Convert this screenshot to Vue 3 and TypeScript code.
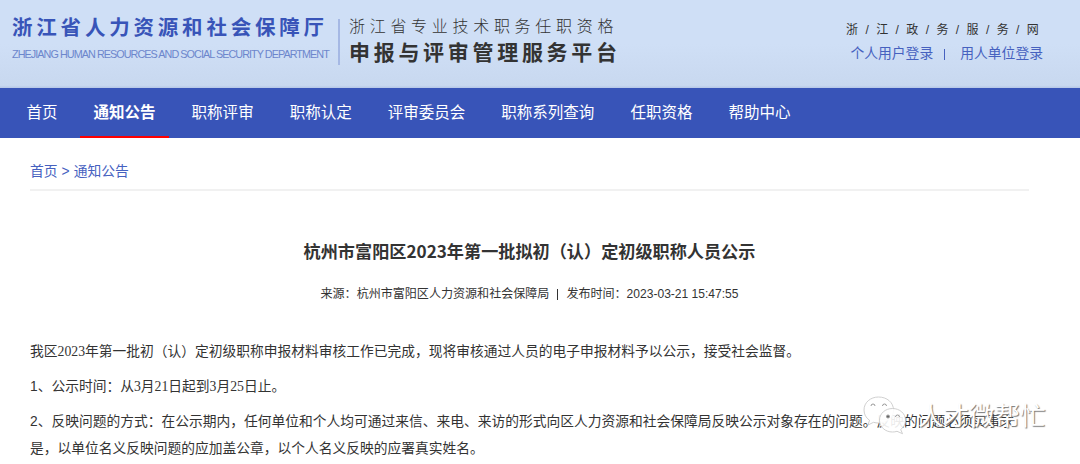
<template>
  <div class="page">
    <header class="banner">
      <div class="brand">
        <div class="dept">
          <div class="dept-cn">浙江省人力资源和社会保障厅</div>
          <div class="dept-en">ZHEJIANG HUMAN RESOURCES AND SOCIAL SECURITY DEPARTMENT</div>
        </div>
        <div class="platform">
          <div class="platform-sub">浙江省专业技术职务任职资格</div>
          <div class="platform-name">申报与评审管理服务平台</div>
        </div>
      </div>
      <div class="portal">
        <div class="portal-name">
          <span v-for="(c, i) in portal" :key="i">{{ c }}</span>
        </div>
        <div class="login">
          <a>个人用户登录</a>
          <i class="bar"></i>
          <a>用人单位登录</a>
        </div>
      </div>
    </header>

    <nav class="nav">
      <a
        v-for="item in menus"
        :key="item"
        class="nav-item"
        :class="{ active: item === current }"
        @click="current = item"
        >{{ item }}</a
      >
    </nav>

    <main class="content">
      <div class="crumbs"><a>首页</a><span class="gt">&gt;</span><a>通知公告</a></div>

      <h1>杭州市富阳区2023年第一批拟初（认）定初级职称人员公示</h1>
      <div class="meta">
        <span>来源：杭州市富阳区人力资源和社会保障局</span>
        <i class="bar"></i>
        <span>发布时间：2023-03-21 15:47:55</span>
      </div>

      <div class="article">
        <p>我区2023年第一批初（认）定初级职称申报材料审核工作已完成，现将审核通过人员的电子申报材料予以公示，接受社会监督。</p>
        <p><span class="num">1</span>、公示时间：从3月21日起到3月25日止。</p>
        <p>
          <span class="num">2</span>、反映问题的方式：在公示期内，任何单位和个人均可通过来信、来电、来访的形式向区人力资源和社会保障局反映公示对象存在的问题。反映的问题必须实事求<br />是，以单位名义反映问题的应加盖公章，以个人名义反映的应署真实姓名。
        </p>
      </div>
    </main>

    <div class="watermark">
      <svg viewBox="0 0 46 40" width="46" height="40">
        <path
          class="bubble"
          d="M15.500 1C7.500 1 1 6.500 1 14c0 4.300 2 7.800 5.500 10.300L5 29l5.500-2.700c1.700.5 3.300.7 5 .7C24 27 30.500 21.500 30.500 14S24 1 15.500 1z"
        />
        <path class="eye" d="M8 10a2 2 0 0 1 4 0M19.500 10a2 2 0 0 1 4 0" />
        <path
          class="bubble"
          d="M29.500 12.500c-7.200 0-13 5-13 11.700s5.800 11.800 13 11.800c1.600 0 3.100-.2 4.500-.7l5.500 2.400-1.800-4.200c3-2.200 4.800-5.500 4.800-9.300 0-6.700-5.800-11.700-13-11.700z"
        />
        <path class="eye" d="M32.500 21a2 2 0 0 1 4 0" />
        <circle class="eye dark" cx="25" cy="20.500" r="1.500" />
      </svg>
      <span class="wm-text">人才微帮忙</span>
    </div>
  </div>
</template>

<script setup lang="ts">
import { ref } from 'vue'

const menus: string[] = [
  '首页',
  '通知公告',
  '职称评审',
  '职称认定',
  '评审委员会',
  '职称系列查询',
  '任职资格',
  '帮助中心',
]
const current = ref('通知公告')
const portal = '浙/江/政/务/服/务/网'.split('')
</script>

<style>
body {
  margin: 0;
  background: #fff;
}
</style>

<style scoped>
.page {
  position: relative;
  width: 1080px;
  height: 464px;
  overflow: hidden;
  font-family: 'Liberation Sans', 'Noto Sans CJK SC', sans-serif;
  color: #333;
  white-space: nowrap;
}

/* --- BANNER --- */
.banner {
  height: 88px;
  box-sizing: border-box;
  display: flex;
  justify-content: space-between;
  padding: 0 37px 0 12px;
  background: linear-gradient(180deg, #cfdff6 0%, #cfdff6 50%, #c8d8ef 97%, #b5c6e6 100%);
}

.brand {
  display: flex;
}

.dept {
  width: 326px;
  padding-top: 13px;
}

.dept-cn {
  font-size: 20.5px;
  line-height: 30px;
  font-weight: 700;
  letter-spacing: 3.8px;
  color: #3854b8;
}

.dept-en {
  margin-top: 4px;
  font-size: 10.8px;
  line-height: 15px;
  letter-spacing: -0.94px;
  color: #6c86cc;
}

.platform {
  height: 46px;
  margin-top: 19px;
  padding-left: 9px;
  border-left: 2px solid #a5b8e4;
}

.platform-sub {
  margin-top: -4px;
  font-size: 16px;
  line-height: 23px;
  font-weight: 300;
  letter-spacing: 4.7px;
}

.platform-name {
  margin-top: 1px;
  font-size: 21px;
  line-height: 28px;
  font-weight: 700;
  letter-spacing: 3.7px;
}

.portal {
  width: 196px;
  padding-top: 21px;
}

.portal-name {
  display: flex;
  justify-content: space-between;
  font-size: 12px;
  line-height: 19px;
  margin: 0 4px 0 -1px;
}

.login {
  display: flex;
  align-items: center;
  justify-content: flex-end;
  margin-top: 3px;
  font-size: 13.8px;
  line-height: 22px;
  color: #4661bf;
}

.login .bar {
  width: 1px;
  height: 11px;
  margin: 0 15px 0 11px;
  background: #4661bf;
}

/* --- NAV --- */
.nav {
  display: flex;
  height: 50px;
  padding-left: 13px;
  background: #3854b8;
}

.nav-item {
  box-sizing: border-box;
  height: 50px;
  padding: 0 13.5px;
  margin-right: 9px;
  font-size: 15.53px;
  line-height: 50px;
  color: #fff;
  cursor: pointer;
}

.nav-item.active {
  font-weight: 700;
  border-bottom: 2px solid #f00;
}

/* --- CONTENT --- */
.content {
  width: 999px;
  margin-left: 30px;
}

.crumbs {
  height: 51px;
  border-bottom: 2px solid #f1f1f1;
  font-size: 13.8px;
  line-height: 67px;
  color: #4661bf;
}

.gt {
  margin: 0 4px;
}

h1 {
  margin: 47px 0 0;
  text-align: center;
  font-family: 'Noto Sans CJK SC', sans-serif;
  font-size: 17.15px;
  line-height: 26px;
  font-weight: 700;
}

.meta {
  display: flex;
  justify-content: center;
  align-items: center;
  margin-top: 20px;
  font-size: 12.05px;
  line-height: 20px;
}

.meta .bar {
  width: 1px;
  height: 11px;
  margin: 0 8px;
  background: #333;
}

.article {
  margin-top: 35px;
  font-family: 'Liberation Serif', 'Noto Sans CJK SC', sans-serif;
  font-size: 13.76px;
  line-height: 26.5px;
}

.article p {
  margin: 0 0 8.5px;
}

.num {
  font-family: 'Liberation Sans', sans-serif;
}

/* --- WATERMARK --- */
.watermark {
  position: absolute;
  left: 863px;
  top: 396px;
  display: flex;
}

.bubble {
  fill: rgba(255, 255, 255, 0.9);
  stroke: #c4c4c4;
  stroke-width: 0.8;
}

.eye {
  fill: none;
  stroke: #999;
  stroke-width: 1;
}

.eye.dark {
  fill: #666;
}

.wm-text {
  margin-left: 9px;
  font-size: 25.5px;
  line-height: 40px;
  color: #fff;
  text-shadow: 1px 1px 1px #777;
}
</style>
